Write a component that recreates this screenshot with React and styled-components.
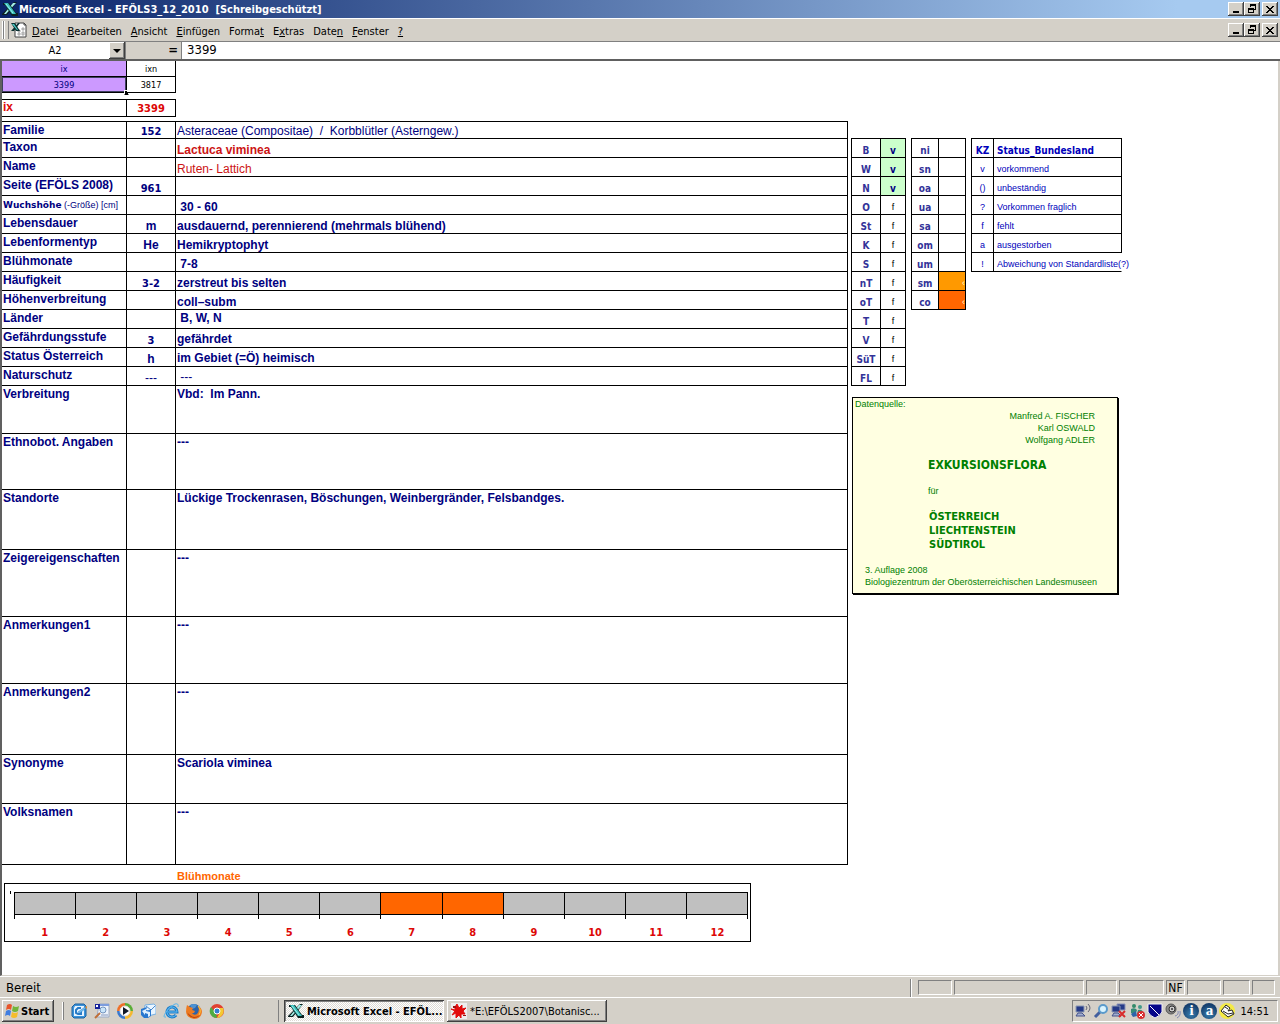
import React from "react";
import styled, { createGlobalStyle } from "styled-components";

const tahoma = '"DejaVu Sans Condensed", "DejaVu Sans", sans-serif';
const arial = '"Liberation Sans", Arial, sans-serif';

const GlobalStyle = createGlobalStyle`
  *,
  *::before {
    box-sizing: border-box;
  }
  body {
    margin: 0;
    background: #d4d0c8;
    font-family: ${tahoma};
    font-size: 11px;
    color: black;
  }
  button, input {
    font: inherit;
    color: inherit;
    border: none;
    border-radius: 0;
    padding: 0;
    margin: 0;
  }
  svg {
    display: block;
    flex: none;
  }
`;

const Screen = styled.div`
  min-height: 100vh;
  display: flex;
  flex-direction: column;
`;

const TitleBar = styled.header`
  height: 18px;
  display: flex;
  align-items: center;
  gap: 1px;
  padding: 0 2px;
  color: white;
  background: linear-gradient(to right, #0a246a, #a6caf0 92%);
`;

const Title = styled.h1`
  flex: 1;
  margin: 0;
  font-family: ${tahoma};
  font-size: 11px;
  font-weight: bold;
  white-space: pre;
`;

const WindowButtons = styled.div`
  display: flex;
  button:last-child {
    margin-left: 2px;
  }
`;

const WindowButton = styled.button`
  width: 16px;
  height: 14px;
  display: flex;
  align-items: center;
  justify-content: center;
  background: #d4d0c8;
  box-shadow: inset -1px -1px #404040, inset 1px 1px white,
    inset -2px -2px #808080;
`;

const MenuBar = styled.nav`
  height: 24px;
  display: flex;
  align-items: center;
  padding: 0 2px;
  border-top: 1px solid white;
  border-bottom: 1px solid #808080;
`;

const Grip = styled.div`
  width: 6px;
  height: 18px;
  margin: 0 2px 0 1px;
  border: solid #808080;
  border-width: 0 1px;
  box-shadow: inset 1px 0 white, -1px 0 white;
`;

const Menu = styled.div`
  flex: 1;
  display: flex;
  gap: 9px;
  padding: 2px 0 0 5px;
`;

const MenuItem = styled.a`
  color: black;
  text-decoration: none;
`;

const FormulaBar = styled.div`
  height: 19px;
  display: flex;
  background: #d4d0c8;
  border-bottom: 2px solid #606060;
`;

const NameBox = styled.div`
  width: 126px;
  display: flex;
  padding-left: 1px;
  border-right: 1px solid #808080;
  background: white;
  input {
    flex: 1;
    min-width: 0;
    text-align: center;
    font-size: 11px;
    background: white;
  }
`;

const DropButton = styled(WindowButton)`
  height: 17px;
`;

const Equals = styled.label`
  width: 56px;
  padding-right: 3px;
  text-align: right;
  font-size: 13px;
  font-weight: bold;
  line-height: 16px;
  border-right: 1px solid #808080;
`;

const FormulaInput = styled.input`
  flex: 1;
  padding: 0 0 2px 5px;
  font-size: 13px;
`;

const Sheet = styled.main`
  flex: 1;
  display: grid;
  grid-template-columns: minmax(0, 846fr) minmax(0, 430fr);
  align-items: start;
  background: white;
  border: solid #d4d0c8;
  border-width: 0 2px 1px;
  border-left-color: #606060;
  font-family: ${arial};
`;

const Table = styled.table`
  border-collapse: separate;
  border-spacing: 0;
  table-layout: fixed;
`;

const KeyTable = styled(Table)`
  width: 174px;
  margin-bottom: 6px;
`;

const KeyCell = styled.td`
  position: relative;
  height: 16px;
  padding: 0;
  text-align: center;
  font-family: ${tahoma};
  font-size: 9px;
  line-height: 12px;
  color: ${(props) => (props.$marked ? "#000080" : "black")};
  background: ${(props) => (props.$marked ? "#cc99ff" : "white")};
  border-right: 1px solid black;
  border-bottom: 1px solid black;
  box-shadow: ${(props) => (props.$selected ? "inset 0 0 0 1px #404060" : "none")};
`;

const FillHandle = styled.span`
  position: absolute;
  right: -3px;
  bottom: -3px;
  width: 5px;
  height: 5px;
  background: black;
  border: 1px solid white;
  border-bottom-color: black;
`;

const IndexTable = styled(Table)`
  width: 174px;
  margin-bottom: 4px;
  border-top: 1px solid black;
  color: #dd0806;
  font-size: 12px;
  font-weight: bold;
  line-height: 15px;
  th,
  td {
    height: 17px;
    padding: 0 1px;
    border-right: 1px solid black;
    border-bottom: 1px solid black;
  }
  th {
    text-align: left;
    vertical-align: top;
  }
  td {
    text-align: center;
    vertical-align: bottom;
    font-family: ${tahoma};
    font-size: 11px;
  }
`;

const RecordTable = styled(Table)`
  width: 100%;
  border-top: 1px solid black;
  color: #000080;
  font-size: 12px;
  line-height: 13px;
`;

const RecordRow = styled.tr`
  height: ${(props) => props.$height}px;
  th,
  td {
    padding: 2px 1px 0;
    border-right: 1px solid black;
    border-bottom: 1px solid black;
  }
`;

const FieldName = styled.th`
  text-align: left;
  vertical-align: top;
  white-space: nowrap;
`;

const SmallName = styled.span`
  font-family: "DejaVu Sans", sans-serif;
  font-size: 9px;
`;

const SmallUnit = styled.span`
  font-size: 9px;
  font-weight: normal;
`;

const FieldCode = styled.td`
  text-align: center;
  vertical-align: bottom;
  font-family: ${(props) => (props.$number ? tahoma : arial)};
  font-size: ${(props) => (props.$number ? 11 : 12)}px;
  font-weight: ${(props) => (props.$empty ? "normal" : "bold")};
`;

const FieldValue = styled.td`
  vertical-align: ${(props) => props.$align || "top"};
  font-weight: ${(props) => (props.$plain ? "normal" : "bold")};
  color: ${(props) => (props.$red ? "#cc1414" : "inherit")};
  white-space: pre;
`;

const ChartTitle = styled.h2`
  height: 18px;
  margin: 0;
  padding: 4px 0 0 175px;
  font-size: 11px;
  line-height: 15px;
  color: #ff6600;
`;

const Chart = styled.section`
  position: relative;
  height: 59px;
  width: calc(100% - 99px);
  margin-left: 2px;
  padding: 8px 2px 0 9px;
  border: 1px solid black;
`;

const AxisMark = styled.span`
  position: absolute;
  left: 5px;
  top: 7px;
  width: 1px;
  height: 3px;
  background: black;
`;

const Months = styled.div`
  display: grid;
  grid-template-columns: repeat(12, 1fr);
  border-right: 1px solid black;
  height: 27px;
`;

const Month = styled.div`
  border-left: 1px solid black;
  &::before {
    content: "";
    display: block;
    height: 23px;
    border-top: 1px solid black;
    border-bottom: 1px solid black;
    background: ${(props) => (props.$blooming ? "#ff6600" : "#c0c0c0")};
  }
`;

const MonthLabels = styled.div`
  display: grid;
  grid-template-columns: repeat(12, 1fr);
  padding-top: 6px;
  text-align: center;
  font-family: ${tahoma};
  font-size: 11px;
  font-weight: bold;
  line-height: 15px;
  color: #dd0806;
`;

const SidePanel = styled.aside`
  padding: 77px 0 0 3px;
`;

const SideTables = styled.div`
  display: flex;
  align-items: flex-start;
  gap: 5px;
  margin-bottom: 11px;
`;

const SideTable = styled(Table)`
  width: ${(props) => props.$width}px;
  flex: none;
  border-top: 1px solid black;
  border-left: 1px solid black;
`;

const SideCell = styled.td`
  height: 19px;
  padding: 5px 0 0;
  text-align: center;
  font-family: ${(props) => (props.$bold ? tahoma : arial)};
  font-size: ${(props) => (props.$bold ? 10 : 9)}px;
  font-weight: ${(props) => (props.$bold ? "bold" : "normal")};
  line-height: 13px;
  color: ${(props) => props.$color || "#333399"};
  background: ${(props) => props.$fill || "white"};
  border-right: 1px solid black;
  border-bottom: 1px solid black;
`;

const MeaningCell = styled(SideCell)`
  padding-left: 3px;
  text-align: left;
  white-space: nowrap;
  background: none;
  border-right-color: ${(props) => (props.$open ? "transparent" : "black")};
`;

const AmountCell = styled(SideCell)`
  text-align: right;
`;

const Source = styled.section`
  width: 266px;
  margin-left: 1px;
  padding: 1px 2px 5px;
  color: #008000;
  background: #ffffe1;
  border: 1px solid black;
  box-shadow: 1px 1px black;
  font-size: 9px;
  line-height: 12px;
  p {
    margin: 0;
  }
`;

const SourceLabel = styled.p`
  line-height: 11px;
`;

const Authors = styled.p`
  padding-right: 20px;
  text-align: right;
`;

const Book = styled.div`
  padding: 11px 0 12px 73px;
`;

const BookTitle = styled.h2`
  margin: 0 0 12px;
  font-family: ${tahoma};
  font-size: 12px;
  line-height: 16px;
`;

const Countries = styled.p`
  padding: 13px 0 0 1px;
  font-family: ${tahoma};
  font-size: 11px;
  font-weight: bold;
  line-height: 14px;
`;

const Imprint = styled.p`
  padding-left: 10px;
  white-space: nowrap;
`;

const StatusBar = styled.footer`
  height: 21px;
  display: flex;
  align-items: center;
  gap: 2px;
  padding: 1px 5px 0 6px;
  border-top: 1px solid white;
`;

const StatusText = styled.span`
  flex: 1;
  font-size: 13px;
`;

const StatusDivider = styled.div`
  width: 2px;
  height: 18px;
  margin-right: 4px;
  border-left: 1px solid #808080;
  border-right: 1px solid white;
`;

const Pane = styled.div`
  width: ${(props) => props.$width}px;
  height: 15px;
  font-size: 12px;
  line-height: 14px;
  text-align: center;
  border: 1px solid;
  border-color: #808080 white white #808080;
`;

const TaskBar = styled.footer`
  height: 27px;
  display: flex;
  align-items: center;
  padding: 0 2px;
  border-top: 1px solid white;
`;

const TaskButton = styled.button`
  width: ${(props) => props.$width}px;
  height: 22px;
  display: flex;
  align-items: center;
  gap: 3px;
  padding: 0 2px 0 4px;
  white-space: nowrap;
  font-weight: ${(props) => (props.$bold ? "bold" : "normal")};
  background: ${(props) =>
    props.$pressed
      ? "repeating-conic-gradient(#ffffff 0 25%, #dedbd5 0 50%) 0 0 / 2px 2px"
      : "#d4d0c8"};
  box-shadow: ${(props) =>
    props.$pressed
      ? "inset 1px 1px #404040, inset -1px -1px white, inset 2px 2px #808080"
      : "inset -1px -1px #404040, inset 1px 1px white, inset -2px -2px #808080"};
`;

const StartButton = styled(TaskButton)`
  gap: 1px;
  padding: 0 2px;
`;

const QuickLaunch = styled.div`
  width: 216px;
  display: flex;
  gap: 7px;
  margin-left: 8px;
  padding: 1px 0 1px 8px;
  border-left: 1px solid white;
  box-shadow: inset 1px 0 #808080;
`;

const Tasks = styled.div`
  flex: 1;
  display: flex;
  gap: 3px;
  padding-left: 5px;
  border-left: 1px solid #808080;
`;

const Tray = styled.div`
  height: 22px;
  display: flex;
  align-items: center;
  gap: 2px;
  padding: 0 8px 0 2px;
  border: 1px solid;
  border-color: #808080 white white #808080;
`;

const Clock = styled.time`
  margin-left: 3px;
`;

const Icon = ({ size = 16, children }) => (
  <svg width={size} height={size} viewBox="0 0 16 16" aria-hidden="true">
    {children}
  </svg>
);

const ExcelIcon = () => (
  <Icon>
    <path d="M12 1h3L5 14H0v-1z" fill="#0b2020" />
    <path d="M11 2h3L4 13H2z" fill="#a4eee8" />
    <path d="M1 2h6l7 10h2v3h-6L3 4H1z" fill="#0b2020" />
    <path d="M2 2h4l8 11h-4z" fill="#3cc0bc" />
    <path d="M4 3l7 9" stroke="#9ff0ea" />
  </Icon>
);

const WorkbookIcon = () => (
  <Icon>
    <path d="M6 1h7l2 2v12H4V1z" fill="#fff" stroke="#444" />
    <path d="M13 1v2h2" fill="none" stroke="#444" />
    <path d="M7 8h2v2H7zm4-2h2v2h-2zm-4 5h2v2H7zm4-1h2v3h-2z" fill="#ccc" stroke="#aaa" />
    <path d="M7 1h2L3 9H0z" fill="#0b3030" />
    <path d="M0 1h4l5 8H5z" fill="#0b3030" />
    <path d="M1 2h2l4 6H6z" fill="#4cd0c8" />
  </Icon>
);

const MinimizeGlyph = () => (
  <svg width="10" height="8" shapeRendering="crispEdges">
    <path d="M2 6h6v2H2z" />
  </svg>
);

const RestoreGlyph = () => (
  <svg width="10" height="10" shapeRendering="crispEdges">
    <path d="M3 0h6v6H7V5h1V2H4v1H3zM1 4h6v5H1zm1 2v2h4V6z" fillRule="evenodd" />
  </svg>
);

const CloseGlyph = () => (
  <svg width="8" height="7" shapeRendering="crispEdges">
    <path d="M0 0h2v1h1v1h2V1h1V0h2v1H7v1H6v1H5v1h1v1h1v1h1v1H6V6H5V5H3v1H2v1H0V6h1V5h1V4h1V3H2V2H1V1H0z" />
  </svg>
);

const WindowsIcon = () => (
  <Icon>
    <path d="M3 2q3-2 5 0L7 7Q5 5 2 7z" fill="#e8552a" />
    <path d="M9 3q3 2 6 0l-1 5q-3 2-6 0z" fill="#71b53a" />
    <path d="M2 8q3-2 5 0l-1 5q-2-2-5 0z" fill="#3f7de0" />
    <path d="M8 9q3 2 6 0l-1 5q-3 2-6 0z" fill="#f5bd2c" />
  </Icon>
);

const DesktopIcon = () => (
  <Icon>
    <path d="M4 1h9l2 2v10l-2 2H3l-2-2V4z" fill="#3a93da" stroke="#1c609f" />
    <path d="M4 3h9v10H3V5z" fill="#e7f4ff" />
    <path d="M10 5H7L5 7v3l2 1h3V8" fill="none" stroke="#287bc8" strokeWidth="2" />
    <path d="M7 9l7-5 1 1-6 5z" fill="#72bff2" stroke="#2c7fc4" strokeWidth=".5" />
    <path d="M14 4l2-1v3z" fill="#e38a2a" />
  </Icon>
);

const SearchFilesIcon = () => (
  <Icon>
    <path d="M5 1h10v13H3z" fill="#edf3fb" stroke="#9aa9c4" />
    <path d="M6 1h9v2H6z" fill="#7d9dde" />
    <path d="M1 1h5v5H1z" fill="#16229a" />
    <path d="M2 2h2v2H2z" fill="#fff" />
    <circle cx="9" cy="7" r="3" fill="#c9e5fa" stroke="#7695bd" />
    <path d="M6 10l-5 5" stroke="#c06f37" strokeWidth="2" />
    <path d="M7 12h7" stroke="#8698bb" />
  </Icon>
);

const MediaPlayerIcon = () => (
  <Icon>
    <path d="M8 8V0a8 8 0 0 0-8 8z" fill="#ef6f28" />
    <path d="M8 8h8a8 8 0 0 0-8-8z" fill="#59ad35" />
    <path d="M8 8v8a8 8 0 0 0 8-8z" fill="#f5b82e" />
    <path d="M8 8H0a8 8 0 0 0 8 8z" fill="#3979ce" />
    <circle cx="8" cy="8" r="5" fill="#fff" stroke="#ddd" />
    <path d="M6 4l6 4-6 4z" fill="#101828" />
  </Icon>
);

const OutlookIcon = () => (
  <Icon>
    <path d="M5 2l9-1 2 2v8l-8 2-4-2z" fill="#e9f5ff" stroke="#76afe1" />
    <path d="M6 3l5 4 4-4" fill="none" stroke="#4b8acc" />
    <path d="M1 6l6-2-1 3q3 1 5-1v7l-3 2H4l-3-3z" fill="#2877cf" />
    <path d="M2 8l4-2v2l4 1v4l-2 1V11L5 10v2z" fill="#dff0ff" />
  </Icon>
);

const ExplorerIcon = () => (
  <Icon>
    <path d="M13 12a5 5 0 1 1 1-3H5" fill="none" stroke="#1f7fca" strokeWidth="3" />
    <path d="M13 12a5 5 0 1 1 1-3H5" fill="none" stroke="#5cb8f0" />
    <path d="M3 14Q-1 15 3 9q4-6 9-8 4-1 3 3" fill="none" stroke="#56b5ee" />
  </Icon>
);

const FirefoxIcon = () => (
  <Icon>
    <circle cx="8" cy="8" r="7" fill="#2c63a8" />
    <path d="M4 2q4-2 7 0L9 5 6 6z" fill="#4b92d4" />
    <path d="M1 2l3 2 3 1-1 2 3 1-1 2-2 0q2 3 5 1 3-3 1-8 4 2 4 6-1 7-8 7-7-1-8-7Q0 5 1 2z" fill="#ed7b22" />
    <path d="M1 8q1 6 7 7 4 0 6-3-6 4-10 0Q1 10 1 8z" fill="#b8430f" />
    <path d="M12 3q4 4 1 9" fill="none" stroke="#ffc83c" />
  </Icon>
);

const ChromeIcon = () => (
  <Icon>
    <circle cx="8" cy="8" r="7" fill="#e14132" />
    <path d="M2 4l5 6 1 5A7 7 0 0 1 2 4z" fill="#4fac43" />
    <path d="M8 5h6a7 7 0 0 1-6 10l3-6z" fill="#f4c932" />
    <circle cx="8" cy="8" r="3" fill="#357fd1" stroke="#fff" />
  </Icon>
);

const IrfanIcon = () => (
  <Icon>
    <path d="M0 0h16v16H0z" fill="#eee" />
    <path d="M6 1l2 4 3-3 0 4 4-1-3 3 2 3-4 0 0 4-2-3-3 3 0-5-4 2 3-4-4-2 4 1 0-3z" fill="#e20b0b" stroke="#e20b0b" />
    <path d="M2 3h3v2H2zm10 9h3v1h-3z" fill="#9e1010" />
  </Icon>
);

const NetworkIcon = ({ cross }) => (
  <Icon>
    {cross && <path d="M6 1h8v6H6z" fill="#263b88" stroke="#8a94b9" />}
    <path d="M1 3h8v6H1z" fill="#243987" stroke="#8b99b5" />
    <path d="M3 10h4l3 3H1z" fill="#a4b0d0" stroke="#42518b" />
    {cross ? (
      <path d="M8 8l6 6m0-6l-6 6" stroke="#d82c2c" strokeWidth="2" />
    ) : (
      <path d="M11 3q2 2 0 4M13 1q4 4 0 8" fill="none" stroke="#667" />
    )}
  </Icon>
);

const MagnifierIcon = () => (
  <Icon>
    <path d="M7 9l-5 5" stroke="#425f9e" strokeWidth="3" />
    <circle cx="10" cy="6" r="4" fill="#d9f4ff" stroke="#5a9acb" strokeWidth="2" />
  </Icon>
);

const MessengerIcon = () => (
  <Icon>
    <circle cx="5" cy="3" r="2" fill="#338a69" />
    <circle cx="11" cy="4" r="2" fill="#439a8b" />
    <path d="M2 6q4-2 6 1l-2 5-4-2zM9 7q4-1 5 2l-2 4-4-2z" fill="#348b78" />
    <path d="M2 11l5-3 1 5-4 1z" fill="#2c64aa" />
    <circle cx="12" cy="12" r="4" fill="#d82f2f" />
    <path d="M10 10l4 4m0-4l-4 4" stroke="white" />
  </Icon>
);

const ShieldIcon = () => (
  <Icon>
    <path d="M1 1h14v8q-2 4-7 6-5-2-7-6z" fill="#05058a" stroke="#f4f4f4" />
    <path d="M3 3l9 9" stroke="#fff" />
  </Icon>
);

const SpeakerIcon = () => (
  <Icon>
    <circle cx="6" cy="6" r="5" fill="#888" stroke="#555" />
    <circle cx="7" cy="6" r="3" fill="#ccc" stroke="#333" />
    <circle cx="7" cy="6" r="1" fill="#333" />
    <path d="M10 13q4-1 3-5M12 15q4-2 3-7" fill="none" stroke="#8289b5" />
  </Icon>
);

const BadgeLetter = styled.span`
  width: 16px;
  height: 16px;
  border-radius: 50%;
  color: white;
  background: radial-gradient(circle at 50% 70%, #397ead, #153e6d 70%);
  font-family: "Liberation Serif", serif;
  font-size: 15px;
  font-weight: bold;
  line-height: 14px;
  text-align: center;
`;

const PrinterIcon = () => (
  <Icon>
    <circle cx="8" cy="8" r="8" fill="#f4ea45" />
    <path d="M2 8l5-6 4 3-2 3 4-1 2 4-6 3z" fill="#fff" stroke="#222" />
    <path d="M4 8l5 3 5-1M6 4l3 2" stroke="#222" fill="none" />
  </Icon>
);

const menus = [
  ["", "D", "atei"],
  ["", "B", "earbeiten"],
  ["", "A", "nsicht"],
  ["", "E", "infügen"],
  ["Forma", "t", ""],
  ["E", "x", "tras"],
  ["Date", "n", ""],
  ["", "F", "enster"],
  ["", "?", ""],
];

const fields = [
  { name: "Familie", code: "152", value: "Asteraceae (Compositae)  /  Korbblütler (Asterngew.)", height: 17, align: "bottom", plain: true },
  { name: "Taxon", value: "Lactuca viminea", align: "bottom", red: true },
  { name: "Name", value: "Ruten- Lattich", align: "bottom", red: true, plain: true },
  { name: "Seite (EFÖLS 2008)", code: "961", value: "" },
  { name: "Wuchshöhe", unit: " (-Größe) [cm]", value: " 30 - 60", align: "bottom" },
  { name: "Lebensdauer", code: "m", value: "ausdauernd, perennierend (mehrmals blühend)", align: "bottom" },
  { name: "Lebenformentyp", code: "He", value: "Hemikryptophyt", align: "bottom" },
  { name: "Blühmonate", value: " 7-8", align: "bottom" },
  { name: "Häufigkeit", code: "3-2", value: "zerstreut bis selten", align: "bottom" },
  { name: "Höhenverbreitung", value: "coll–subm", align: "bottom" },
  { name: "Länder", value: " B, W, N" },
  { name: "Gefährdungsstufe", code: "3", value: "gefährdet", align: "middle" },
  { name: "Status Österreich", code: "h", value: "im Gebiet (=Ö) heimisch", align: "middle" },
  { name: "Naturschutz", code: "---", value: " ---", align: "middle", plain: true },
  { name: "Verbreitung", value: "Vbd:  Im Pann.", height: 48 },
  { name: "Ethnobot. Angaben", value: "---", height: 56 },
  { name: "Standorte", value: "Lückige Trockenrasen, Böschungen, Weinbergränder, Felsbandges.", height: 60 },
  { name: "Zeigereigenschaften", value: "---", height: 67 },
  { name: "Anmerkungen1", value: "---", height: 67 },
  { name: "Anmerkungen2", value: "---", height: 71 },
  { name: "Synonyme", value: "Scariola viminea", height: 49 },
  { name: "Volksnamen", value: "---", height: 61 },
];

const present = ["B", "W", "N"];
const states = ["B", "W", "N", "O", "St", "K", "S", "nT", "oT", "T", "V", "SüT", "FL"];

const zones = ["ni", "sn", "oa", "ua", "sa", "om", "um", "sm", "co"];
const zoneFill = { sm: "#ff9900", co: "#ff6600" };

const legend = [
  ["v", "vorkommend"],
  ["()", "unbeständig"],
  ["?", "Vorkommen fraglich"],
  ["f", "fehlt"],
  ["a", "ausgestorben"],
  ["!", "Abweichung von Standardliste(?)"],
];

const months = [1, 2, 3, 4, 5, 6, 7, 8, 9, 10, 11, 12];
const blooming = [7, 8];

const panes = [
  [34], [130], [31], [45], [19, "NF"], [34], [27], [23],
];

function WindowControls({ target }) {
  return (
    <WindowButtons>
      <WindowButton aria-label={`${target} minimieren`}>
        <MinimizeGlyph />
      </WindowButton>
      <WindowButton aria-label={`${target} wiederherstellen`}>
        <RestoreGlyph />
      </WindowButton>
      <WindowButton aria-label={`${target} schließen`}>
        <CloseGlyph />
      </WindowButton>
    </WindowButtons>
  );
}

function Record() {
  return (
    <RecordTable>
      <colgroup>
        <col width="125" />
        <col width="49" />
        <col />
      </colgroup>
      <tbody>
        {fields.map((field) => (
          <RecordRow key={field.name} $height={field.height || 19}>
            <FieldName scope="row">
              {field.unit ? (
                <>
                  <SmallName>{field.name}</SmallName>
                  <SmallUnit>{field.unit}</SmallUnit>
                </>
              ) : (
                field.name
              )}
            </FieldName>
            <FieldCode $number={/\d/.test(field.code)} $empty={field.code === "---"}>
              {field.code}
            </FieldCode>
            <FieldValue $align={field.align} $plain={field.plain} $red={field.red}>
              {field.value}
            </FieldValue>
          </RecordRow>
        ))}
      </tbody>
    </RecordTable>
  );
}

function BloomChart() {
  return (
    <>
      <ChartTitle>Blühmonate</ChartTitle>
      <Chart>
        <AxisMark />
        <Months>
          {months.map((month) => (
            <Month key={month} $blooming={blooming.includes(month)} />
          ))}
        </Months>
        <MonthLabels>
          {months.map((month) => (
            <span key={month}>{month}</span>
          ))}
        </MonthLabels>
      </Chart>
    </>
  );
}

function Distribution() {
  return (
    <SideTables>
      <SideTable $width={55}>
        <colgroup>
          <col width="29" />
          <col width="25" />
        </colgroup>
        <tbody>
          {states.map((state) => {
            const found = present.includes(state);
            return (
              <tr key={state}>
                <SideCell $bold>{state}</SideCell>
                <SideCell
                  $bold={found}
                  $fill={found && "#ccffcc"}
                  $color={found ? "#000080" : "black"}
                >
                  {found ? "v" : "f"}
                </SideCell>
              </tr>
            );
          })}
        </tbody>
      </SideTable>
      <SideTable $width={55}>
        <colgroup>
          <col width="27" />
          <col width="27" />
        </colgroup>
        <tbody>
          {zones.map((zone) => (
            <tr key={zone}>
              <SideCell $bold>{zone}</SideCell>
              <AmountCell $fill={zoneFill[zone]} $color="#ffffcc">
                {zoneFill[zone] ? "‹" : ""}
              </AmountCell>
            </tr>
          ))}
        </tbody>
      </SideTable>
      <SideTable $width={151}>
        <colgroup>
          <col width="22" />
          <col width="128" />
        </colgroup>
        <tbody>
          <tr>
            <SideCell $bold $color="#0000bb">KZ</SideCell>
            <MeaningCell $bold $color="#0000bb">Status_Bundesland</MeaningCell>
          </tr>
          {legend.map(([sign, meaning]) => (
            <tr key={sign}>
              <SideCell $color="#0000bb">{sign}</SideCell>
              <MeaningCell $color="#0000bb" $open={sign === "!"}>
                {meaning}
              </MeaningCell>
            </tr>
          ))}
        </tbody>
      </SideTable>
    </SideTables>
  );
}

function App() {
  return (
    <Screen>
      <GlobalStyle />
      <TitleBar>
        <ExcelIcon />
        <Title>Microsoft Excel - EFÖLS3_12_2010  [Schreibgeschützt]</Title>
        <WindowControls target="Fenster" />
      </TitleBar>
      <MenuBar>
        <Grip />
        <WorkbookIcon />
        <Menu>
          {menus.map(([before, key, after]) => (
            <MenuItem href="#" key={before + key + after}>
              {before}
              <u>{key}</u>
              {after}
            </MenuItem>
          ))}
        </Menu>
        <WindowControls target="Mappe" />
      </MenuBar>
      <FormulaBar>
        <NameBox>
          <input aria-label="Namenfeld" defaultValue="A2" />
          <DropButton aria-label="Namen anzeigen">
            <svg width="8" height="4">
              <path d="M0 0h8L4 4z" />
            </svg>
          </DropButton>
        </NameBox>
        <Equals htmlFor="formula">=</Equals>
        <FormulaInput id="formula" defaultValue="3399" />
      </FormulaBar>

      <Sheet>
        <div>
          <KeyTable>
            <colgroup>
              <col width="125" />
              <col width="49" />
            </colgroup>
            <tbody>
              <tr>
                <KeyCell $marked>ix</KeyCell>
                <KeyCell>ixn</KeyCell>
              </tr>
              <tr>
                <KeyCell $marked $selected>
                  3399
                  <FillHandle />
                </KeyCell>
                <KeyCell>3817</KeyCell>
              </tr>
            </tbody>
          </KeyTable>
          <IndexTable>
            <colgroup>
              <col width="125" />
              <col width="49" />
            </colgroup>
            <tbody>
              <tr>
                <th scope="row">ix</th>
                <td>3399</td>
              </tr>
            </tbody>
          </IndexTable>
          <Record />
          <BloomChart />
        </div>
        <SidePanel>
          <Distribution />
          <Source>
            <SourceLabel>Datenquelle:</SourceLabel>
            <Authors>
              Manfred A. FISCHER
              <br />
              Karl OSWALD
              <br />
              Wolfgang ADLER
            </Authors>
            <Book>
              <BookTitle>EXKURSIONSFLORA</BookTitle>
              <p>für</p>
              <Countries>
                ÖSTERREICH
                <br />
                LIECHTENSTEIN
                <br />
                SÜDTIROL
              </Countries>
            </Book>
            <Imprint>
              3. Auflage 2008
              <br />
              Biologiezentrum der Oberösterreichischen Landesmuseen
            </Imprint>
          </Source>
        </SidePanel>
      </Sheet>

      <StatusBar>
        <StatusText>Bereit</StatusText>
        <StatusDivider />
        {panes.map(([width, text], i) => (
          <Pane key={i} $width={width}>
            {text}
          </Pane>
        ))}
      </StatusBar>
      <TaskBar>
        <StartButton $width={52} $bold>
          <WindowsIcon />
          Start
        </StartButton>
        <QuickLaunch>
          <DesktopIcon />
          <SearchFilesIcon />
          <MediaPlayerIcon />
          <OutlookIcon />
          <ExplorerIcon />
          <FirefoxIcon />
          <ChromeIcon />
        </QuickLaunch>
        <Tasks>
          <TaskButton $width={160} $bold $pressed>
            <ExcelIcon />
            Microsoft Excel - EFÖL...
          </TaskButton>
          <TaskButton $width={160}>
            <IrfanIcon />
            *E:\EFÖLS2007\Botanisc...
          </TaskButton>
        </Tasks>
        <Tray>
          <NetworkIcon />
          <MagnifierIcon />
          <NetworkIcon cross />
          <MessengerIcon />
          <ShieldIcon />
          <SpeakerIcon />
          <BadgeLetter>i</BadgeLetter>
          <BadgeLetter>a</BadgeLetter>
          <PrinterIcon />
          <Clock>14:51</Clock>
        </Tray>
      </TaskBar>
    </Screen>
  );
}

export default App;
